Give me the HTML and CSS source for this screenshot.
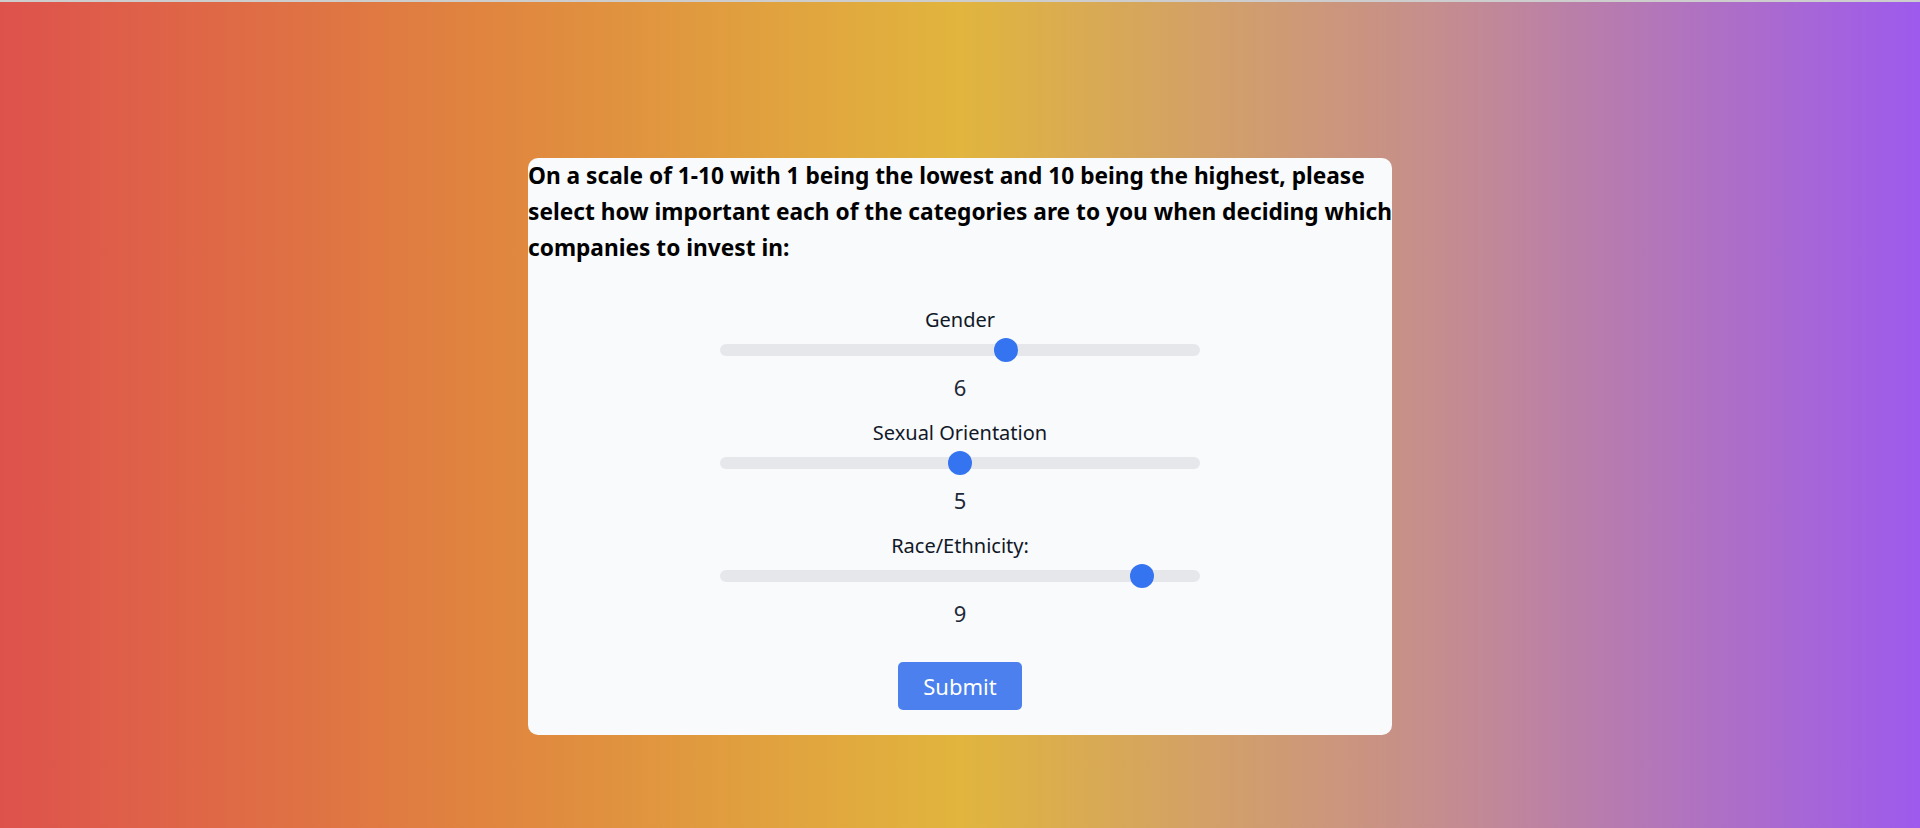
FILE: index.html
```html
<!DOCTYPE html>
<html lang="en">
<head>
<meta charset="utf-8">
<title>Survey</title>
<link rel="stylesheet" href="styles.css">
</head>
<body>
<main class="page">
  <form class="card">
    <h1 class="question">On a scale of 1-10 with 1 being the lowest and 10 being the highest, please<br>select how important each of the categories are to you when deciding which<br>companies to invest in:</h1>
    <div class="group">
      <label class="label">Gender</label>
      <div class="slider"><div class="track"></div><div class="thumb" style="--p: 0.6"></div></div>
      <div class="value">6</div>
    </div>
    <div class="group">
      <label class="label">Sexual Orientation</label>
      <div class="slider"><div class="track"></div><div class="thumb" style="--p: 0.5"></div></div>
      <div class="value">5</div>
    </div>
    <div class="group">
      <label class="label">Race/Ethnicity:</label>
      <div class="slider"><div class="track"></div><div class="thumb" style="--p: 0.9"></div></div>
      <div class="value">9</div>
    </div>
    <button type="button" class="submit">Submit</button>
  </form>
</main>
</body>
</html>
```
FILE: styles.css
```css
html, body {
  margin: 0;
  padding: 0;
  height: 100%;
}
body {
  font-family: "Noto Sans", "Open Sans", sans-serif;
  border-top: 2px solid #cdcdcd;
  box-sizing: border-box;
  background: linear-gradient(to right, #de524c 0%, #e0843f 25%, #e1b53e 50%, #c58d8e 75%, #9d5aed 100%);
}
.page {
  display: flex;
  justify-content: center;
  padding-top: 156px;
}
.card {
  width: 864px;
  background: #f8fafc;
  border-radius: 10px;
  display: flex;
  flex-direction: column;
  align-items: center;
  padding-bottom: 25px;
}
.question {
  align-self: stretch;
  margin: 0 0 39px 0;
  font-size: 22.7px;
  line-height: 36px;
  font-weight: 700;
  white-space: nowrap;
  color: #000;
}
.group {
  display: flex;
  flex-direction: column;
  align-items: center;
  margin-bottom: 13px;
}
.label {
  font-size: 20px;
  line-height: 30px;
  color: #111827;
}
.slider {
  position: relative;
  width: 480px;
  height: 24px;
  margin-top: 3px;
}
.track {
  position: absolute;
  left: 0;
  right: 0;
  top: 6px;
  height: 12px;
  border-radius: 6px;
  background: #e5e7eb;
}
.thumb {
  position: absolute;
  top: 0;
  left: calc(var(--p, 0) * (100% - 24px));
  width: 24px;
  height: 24px;
  border-radius: 50%;
  background: #3574f0;
}
.value {
  margin-top: 8px;
  font-size: 22px;
  line-height: 35px;
  color: #1f2937;
}
.submit {
  margin-top: 18px;
  width: 124px;
  height: 48px;
  border: none;
  border-radius: 5px;
  background: #4b80ee;
  color: #fff;
  font-family: "Noto Sans", "Open Sans", sans-serif;
  font-size: 22px;
  cursor: pointer;
}
```
